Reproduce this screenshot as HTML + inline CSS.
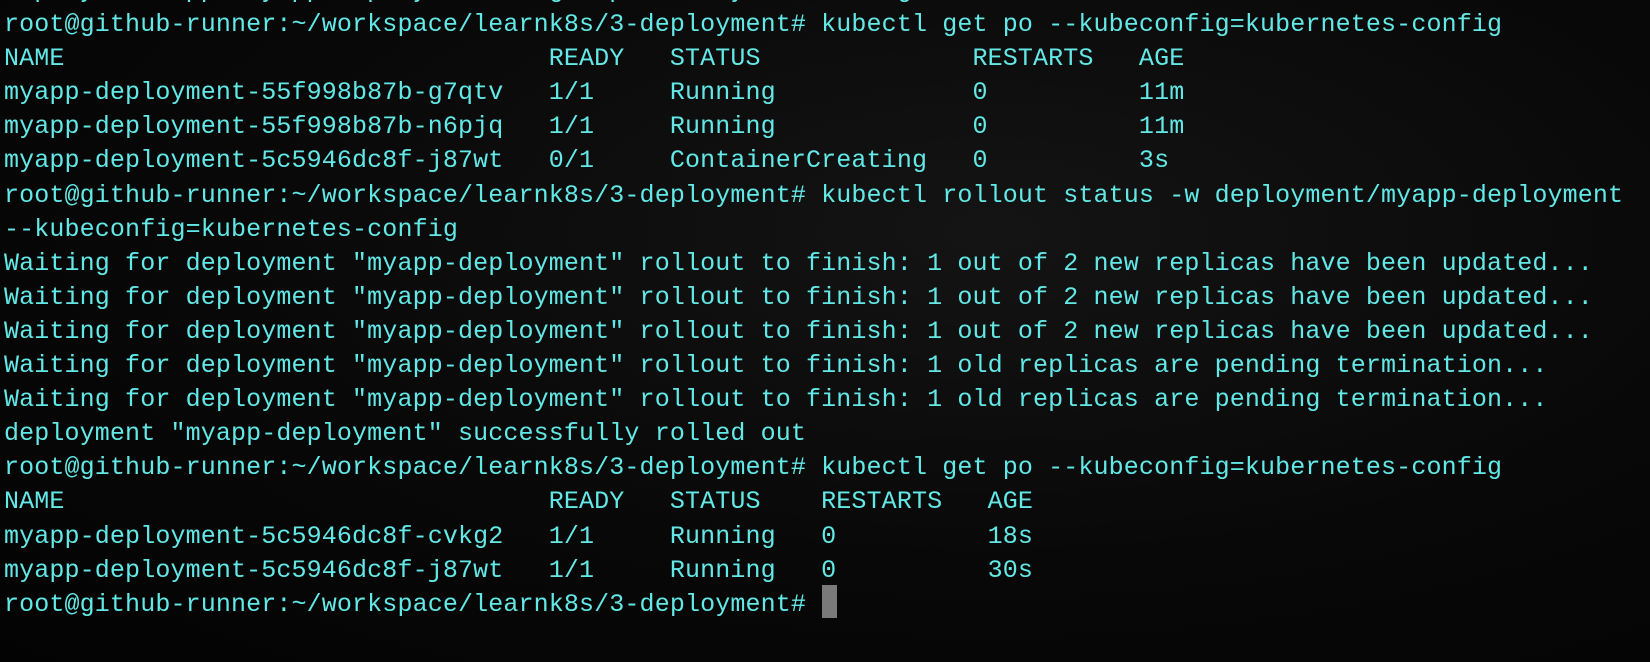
<!DOCTYPE html>
<html><head><meta charset="utf-8"><style>
html,body{margin:0;padding:0;background:#050505;width:1650px;height:662px;overflow:hidden}
body{background:radial-gradient(ellipse at 60% 35%,#141414 0%,#080808 55%,#030303 100%)}
pre{position:absolute;left:4px;top:-26px;margin:0;font-family:"Liberation Mono",monospace;font-size:25px;letter-spacing:0.13px;line-height:34.1px;color:#62e8e6;white-space:pre}
.cur{position:absolute;left:822px;top:585px;width:15px;height:33px;background:#7a7a7a}
</style></head><body>
<pre>deployment.apps/myapp-deployment image updated by kubeconfig
root@github-runner:~/workspace/learnk8s/3-deployment# kubectl get po --kubeconfig=kubernetes-config
NAME                                READY   STATUS              RESTARTS   AGE
myapp-deployment-55f998b87b-g7qtv   1/1     Running             0          11m
myapp-deployment-55f998b87b-n6pjq   1/1     Running             0          11m
myapp-deployment-5c5946dc8f-j87wt   0/1     ContainerCreating   0          3s
root@github-runner:~/workspace/learnk8s/3-deployment# kubectl rollout status -w deployment/myapp-deployment
--kubeconfig=kubernetes-config
Waiting for deployment "myapp-deployment" rollout to finish: 1 out of 2 new replicas have been updated...
Waiting for deployment "myapp-deployment" rollout to finish: 1 out of 2 new replicas have been updated...
Waiting for deployment "myapp-deployment" rollout to finish: 1 out of 2 new replicas have been updated...
Waiting for deployment "myapp-deployment" rollout to finish: 1 old replicas are pending termination...
Waiting for deployment "myapp-deployment" rollout to finish: 1 old replicas are pending termination...
deployment "myapp-deployment" successfully rolled out
root@github-runner:~/workspace/learnk8s/3-deployment# kubectl get po --kubeconfig=kubernetes-config
NAME                                READY   STATUS    RESTARTS   AGE
myapp-deployment-5c5946dc8f-cvkg2   1/1     Running   0          18s
myapp-deployment-5c5946dc8f-j87wt   1/1     Running   0          30s
root@github-runner:~/workspace/learnk8s/3-deployment# </pre>
<div class="cur"></div>
</body></html>
